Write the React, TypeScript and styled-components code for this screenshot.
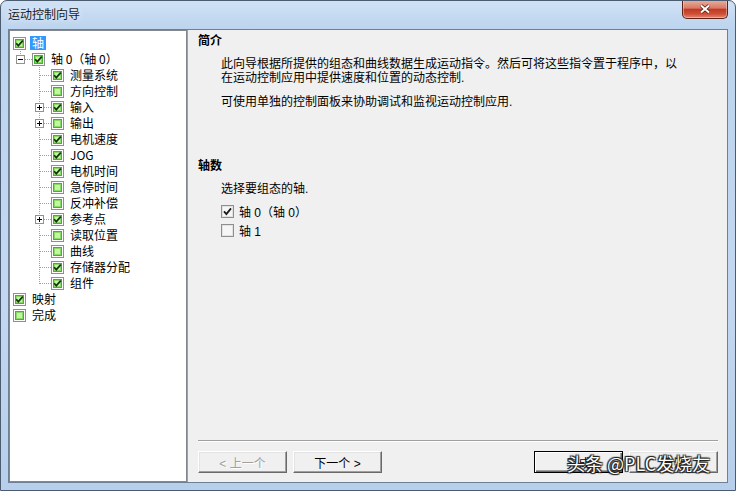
import styled, { createGlobalStyle } from 'styled-components';

type Guide = 'blank' | 'tee' | 'end';

interface TreeItem {
  label: string;
  guides: Guide[];
  checked: boolean;
  expander?: 'plus' | 'minus';
  selected?: boolean;
}

const treeItems: TreeItem[] = [
  { label: '轴', guides: [], checked: true, selected: true },
  { label: '轴 0（轴 0）', guides: ['end'], checked: true, expander: 'minus' },
  { label: '测量系统', guides: ['blank', 'tee'], checked: true },
  { label: '方向控制', guides: ['blank', 'tee'], checked: false },
  { label: '输入', guides: ['blank', 'tee'], checked: true, expander: 'plus' },
  { label: '输出', guides: ['blank', 'tee'], checked: false, expander: 'plus' },
  { label: '电机速度', guides: ['blank', 'tee'], checked: true },
  { label: 'JOG', guides: ['blank', 'tee'], checked: true },
  { label: '电机时间', guides: ['blank', 'tee'], checked: true },
  { label: '急停时间', guides: ['blank', 'tee'], checked: false },
  { label: '反冲补偿', guides: ['blank', 'tee'], checked: false },
  { label: '参考点', guides: ['blank', 'tee'], checked: true, expander: 'plus' },
  { label: '读取位置', guides: ['blank', 'tee'], checked: false },
  { label: '曲线', guides: ['blank', 'tee'], checked: false },
  { label: '存储器分配', guides: ['blank', 'tee'], checked: true },
  { label: '组件', guides: ['blank', 'end'], checked: true },
  { label: '映射', guides: [], checked: true },
  { label: '完成', guides: [], checked: false },
];

const GuideCell = ({ kind, expander }: { kind: Guide; expander?: 'plus' | 'minus' }) => (
  <GutterSvg width="19" height="16" viewBox="0 0 19 16">
    {kind !== 'blank' && (
      <g stroke="#a0a0a0" strokeWidth="1" strokeDasharray="1 1">
        <line x1="7.5" y1="0" x2="7.5" y2={kind === 'tee' ? 16 : 9} />
        <line x1="8" y1="8.5" x2="19" y2="8.5" />
      </g>
    )}
    {expander && (
      <g>
        <rect x="3.5" y="4.5" width="8" height="8" fill="#fff" stroke="#919191" />
        <line x1="5" y1="8.5" x2="10" y2="8.5" stroke="#000" />
        {expander === 'plus' && <line x1="7.5" y1="6" x2="7.5" y2="11" stroke="#000" />}
      </g>
    )}
  </GutterSvg>
);

const StateBox = ({ checked }: { checked: boolean }) => (
  <StateSvg width="13" height="13" viewBox="0 0 13 13">
    <rect x="0.5" y="0.5" width="12" height="12" fill="#fff" stroke="#8e8f8f" />
    <rect x="2" y="2" width="9" height="9" fill="#3fb52b" />
    <rect x="3" y="3" width="7" height="7" fill="#86dc62" />
    <rect x="4" y="4" width="5" height="5" fill="#c4f4a6" />
    {checked && (
      <path d="M3.2 6.2 L5.3 8.6 L9.8 3.6" fill="none" stroke="#17330f" strokeWidth="1.7" />
    )}
  </StateSvg>
);

const CheckBox = ({ checked }: { checked: boolean }) => (
  <svg width="13" height="13" viewBox="0 0 13 13">
    <rect x="0.5" y="0.5" width="12" height="12" fill="#f6f6f6" stroke="#8e8f8f" />
    <rect x="1.5" y="1.5" width="10" height="10" fill="none" stroke="#e2e2e2" />
    {checked && (
      <path d="M3 6.3 L5.4 9 L10 3.4" fill="none" stroke="#1a1a1a" strokeWidth="1.8" />
    )}
  </svg>
);

const App = () => {
  return (
    <>
      <GlobalStyle />
      <Window>
        <TitleBar>
          <Title>运动控制向导</Title>
          <CloseButton>
            <svg width="12" height="10" viewBox="0 0 12 10">
              <path d="M2 1.5 L10 8.5 M10 1.5 L2 8.5" stroke="#5a1a10" strokeWidth="3.6" />
              <path d="M2 1.5 L10 8.5 M10 1.5 L2 8.5" stroke="#fff" strokeWidth="2" />
            </svg>
          </CloseButton>
        </TitleBar>

        <Client>
          <Tree>
            {treeItems.map((item, i) => (
              <TreeRow key={i}>
                {item.guides.map((g, j) => (
                  <GuideCell
                    key={j}
                    kind={g}
                    expander={j === item.guides.length - 1 ? item.expander : undefined}
                  />
                ))}
                <StateBox checked={item.checked} />
                <Label $selected={item.selected}>{item.label}</Label>
              </TreeRow>
            ))}
          </Tree>

          <Panel>
            <Heading>简介</Heading>
            <Para>
              此向导根据所提供的组态和曲线数据生成运动指令。然后可将这些指令置于程序中，以
              <br />
              在运动控制应用中提供速度和位置的动态控制.
            </Para>
            <Para>可使用单独的控制面板来协助调试和监视运动控制应用.</Para>

            <Heading $gap={39}>轴数</Heading>
            <Para>选择要组态的轴.</Para>
            <CheckList>
              <CheckRow>
                <CheckBox checked />
                <span>轴 0（轴 0）</span>
              </CheckRow>
              <CheckRow>
                <CheckBox checked={false} />
                <span>轴 1</span>
              </CheckRow>
            </CheckList>

            <Spacer />
            <Separator />
            <ButtonRow>
              <ButtonGroup>
                <Button disabled>&lt; 上一个</Button>
                <Button>下一个 &gt;</Button>
              </ButtonGroup>
              <ButtonGroup>
                <Button $default>完成</Button>
                <Button>取消</Button>
              </ButtonGroup>
            </ButtonRow>
          </Panel>
        </Client>

        <Watermark>头条 @PLC发烧友</Watermark>
      </Window>
    </>
  );
};

export default App;

const GlobalStyle = createGlobalStyle`
  html, body {
    margin: 0;
    padding: 0;
    background: #fff;
  }
  body {
    font-family: "Liberation Sans", "Noto Sans CJK SC", sans-serif;
    font-size: 12px;
    color: #000;
  }
`;

const Window = styled.div`
  position: relative;
  width: 736px;
  height: 491px;
  box-sizing: border-box;
  border: 1px solid #4b5b70;
  border-radius: 7px 7px 0 0;
  background: linear-gradient(180deg, #cfe1f5 0px, #bcd4ee 28px, #c3d8f0 60%, #b7cfeb 100%);
  display: flex;
  flex-direction: column;
  overflow: hidden;
`;

const TitleBar = styled.div`
  height: 28px;
  flex-shrink: 0;
  display: flex;
  justify-content: space-between;
  align-items: flex-start;
  padding: 0 7px 0 7px;
`;

const Title = styled.span`
  font-family: "Noto Sans CJK SC", sans-serif;
  line-height: 26px;
  color: #1b1b1b;
  text-shadow: 0 0 6px rgba(255, 255, 255, 0.9);
`;

const CloseButton = styled.div`
  width: 46px;
  height: 19px;
  margin-top: -1px;
  box-sizing: border-box;
  border: 1px solid #5c2218;
  border-top: none;
  border-radius: 0 0 5px 5px;
  background: linear-gradient(180deg, #eab0a2 0%, #d77a66 45%, #c03a22 52%, #cf4f36 78%, #e08a74 100%);
  box-shadow: inset 0 0 0 1px rgba(255, 210, 200, 0.5);
  display: flex;
  align-items: center;
  justify-content: center;
`;

const Client = styled.div`
  flex: 1;
  min-height: 0;
  margin: 0 7px 7px 7px;
  border: 1px solid #6f7f94;
  background: #f0f0f0;
  display: flex;
`;

const Tree = styled.div`
  width: 178px;
  flex-shrink: 0;
  box-sizing: border-box;
  background: #fff;
  border: 1px solid #828790;
  padding: 4px 0 0 3px;
  font-family: "Noto Sans CJK SC", sans-serif;
`;

const TreeRow = styled.div`
  display: flex;
  align-items: center;
  height: 16px;
`;

const GutterSvg = styled.svg`
  flex-shrink: 0;
  display: block;
`;

const StateSvg = styled.svg`
  flex-shrink: 0;
  display: block;
  margin: 1px 4px 0 0;
`;

const Label = styled.span<{ $selected?: boolean }>`
  line-height: 14px;
  padding: 0 2px;
  white-space: nowrap;
  background: ${p => (p.$selected ? '#3399ff' : 'transparent')};
  color: ${p => (p.$selected ? '#fff' : '#000')};
`;

const Panel = styled.div`
  flex: 1;
  display: flex;
  flex-direction: column;
  padding: 3px 9px 9px 10px;
  border-left: 1px solid #a0a0a0;
`;

const Heading = styled.div<{ $gap?: number }>`
  font-family: "Noto Sans CJK SC", sans-serif;
  font-weight: bold;
  line-height: 14px;
  margin-top: ${p => p.$gap ?? 0}px;
  margin-bottom: 10px;
`;

const Para = styled.p`
  margin: 0 0 10px 23px;
  line-height: 14px;
  white-space: nowrap;
`;

const CheckList = styled.div`
  display: flex;
  flex-direction: column;
  gap: 1px;
  margin: -4px 0 0 23px;
`;

const CheckRow = styled.label`
  display: flex;
  align-items: center;
  gap: 5px;
  height: 18px;
`;

const Spacer = styled.div`
  flex: 1;
`;

const Separator = styled.div`
  border-top: 1px solid #a0a0a0;
  border-bottom: 1px solid #fff;
  margin-bottom: 9px;
`;

const ButtonRow = styled.div`
  display: flex;
  justify-content: space-between;
`;

const ButtonGroup = styled.div`
  display: flex;
  gap: 6px;
`;

const Button = styled.button<{ $default?: boolean }>`
  width: 89px;
  height: 22px;
  padding: 0;
  box-sizing: border-box;
  background: #f0f0f0;
  font-family: "Liberation Sans", "Noto Sans CJK SC", sans-serif;
  font-size: 12px;
  color: #000;
  border: 1px solid;
  border-color: ${p => (p.$default ? '#000' : '#fff #696969 #696969 #fff')};
  box-shadow: ${p =>
    p.$default
      ? 'inset 1px 1px 0 #fff, inset -1px -1px 0 #696969, inset -2px -2px 0 #a0a0a0'
      : 'inset -1px -1px 0 #a0a0a0, inset 1px 1px 0 #e3e3e3'};

  &:disabled {
    color: #a0a0a0;
    text-shadow: 1px 1px 0 #fff;
  }
`;

const Watermark = styled.div`
  position: absolute;
  left: 566px;
  top: 451px;
  font-family: "Noto Sans CJK SC", sans-serif;
  font-size: 18px;
  line-height: 22px;
  color: #fff;
  white-space: nowrap;
  text-shadow: 0 0 1px #000, 1px 1px 1px #222, -1px -1px 1px #222, 1px -1px 1px #222, -1px 1px 1px #222;
`;
